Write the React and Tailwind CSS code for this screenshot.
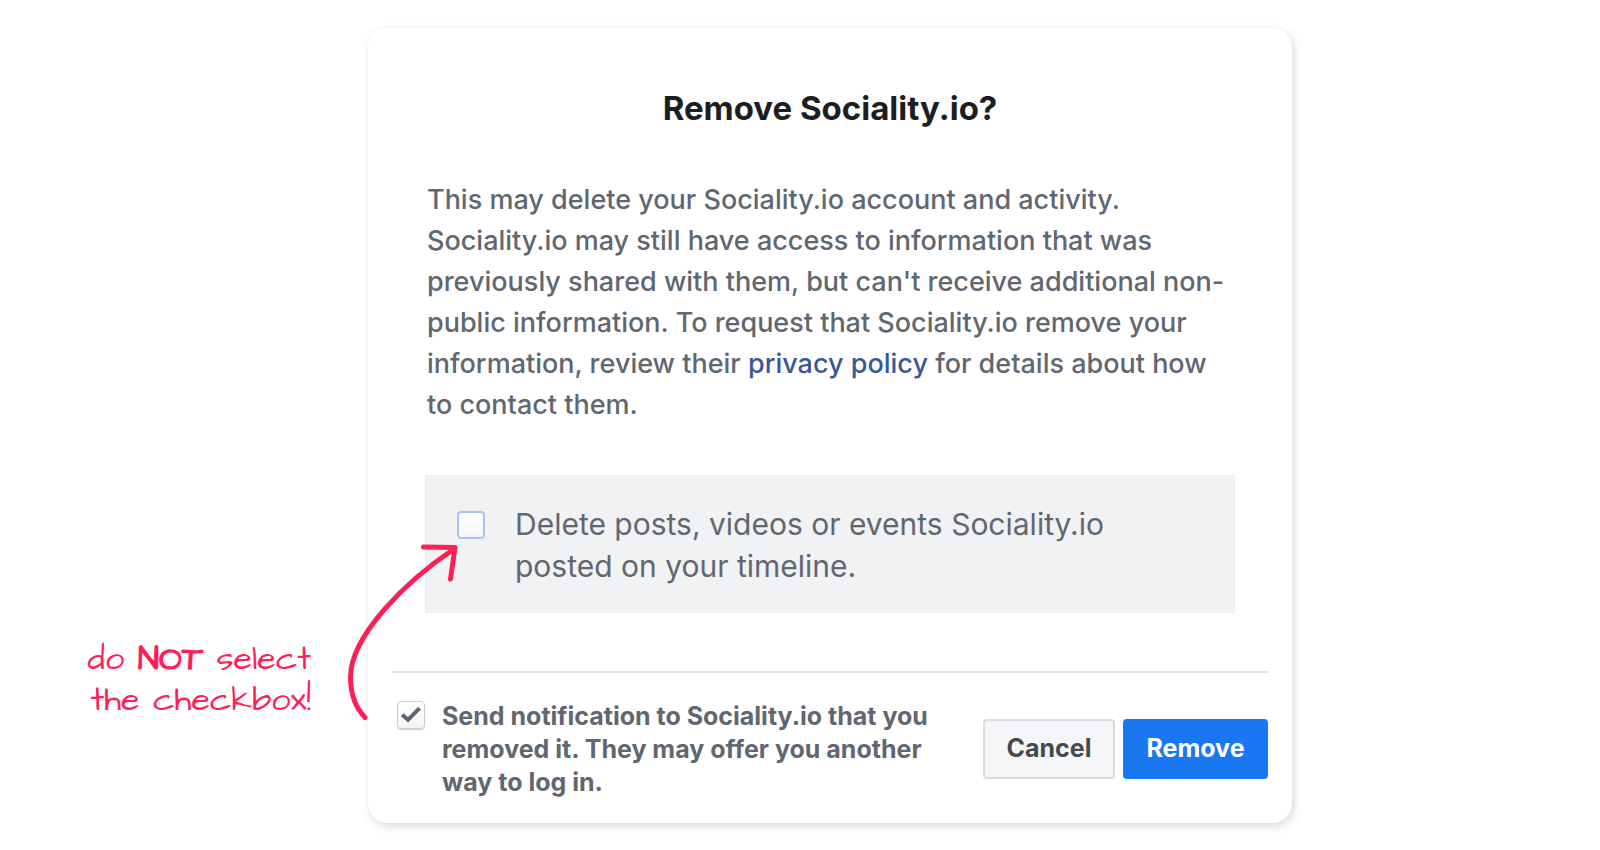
import { useState } from "react";

// ─── CHECKBOX ─────────────────────────────────────────────────────────────────

function Checkbox({ id, checked, onChange, className }) {
  return (
    <span className="relative flex w-7 h-7 shrink-0">
      <input
        id={id}
        type="checkbox"
        checked={checked}
        onChange={(e) => onChange(e.target.checked)}
        className={`appearance-none w-7 h-7 rounded-[4px] bg-linear-to-b ${className}`}
      />
      {checked && (
        <svg
          viewBox="0 0 28 28"
          className="absolute inset-0 w-7 h-7 pointer-events-none"
          fill="none"
          stroke="#5f6673"
          strokeWidth="4"
        >
          <path d="M5.2 13.7 L11 18.8 L22.6 7.1" />
        </svg>
      )}
    </span>
  );
}

// ─── HAND DRAWN ARROW ─────────────────────────────────────────────────────────

function Arrow() {
  return (
    <svg
      viewBox="0 0 120 190"
      aria-hidden="true"
      className="absolute -left-6 top-[508px] w-[120px] h-[190px] pointer-events-none"
      fill="none"
      stroke="#ff1f57"
      strokeWidth="5"
      strokeLinecap="round"
      strokeLinejoin="round"
    >
      <path d="M21 181.5 C11 171 6.5 157 6.5 141 C6.5 100 62 45 110 13" />
      <path d="M79.5 11 L111 11.5 L106.5 43" />
    </svg>
  );
}

export default function App() {
  const [deletePosts, setDeletePosts] = useState(false);
  const [notify, setNotify] = useState(true);

  return (
    <div className="min-h-screen bg-white flex items-start pt-7 pb-7 font-['Inter',sans-serif] text-[#606770]">
      <aside className="w-[368px] shrink-0 pt-[611px] pr-[57px]">
        <p className="text-right text-[34px] leading-[41px] text-[#ff1f57] font-['Architects_Daughter','Lato',sans-serif]">
          do <strong className="font-black">NOT</strong> select
          <br />
          the checkbox!
        </p>
      </aside>

      <main className="relative flex-1 max-w-[924px] rounded-[20px] bg-white px-6 pt-[60px] pb-6 shadow-[2px_3px_10px_rgba(60,90,90,0.22)]">
        <h1 className="text-center text-[33px] leading-10 font-bold text-[#1c1e21]">
          Remove Sociality.io?
        </h1>

        <p className="mt-[51px] px-[35px] text-[27px] leading-[41px] font-medium">
          This may delete your Sociality.io account and activity. Sociality.io may still have access to
          information that was previously shared with them, but can't receive additional non-public
          information. To request that Sociality.io remove your information, review their{" "}
          <a href="#privacy" className="text-[#385898]">
            privacy policy
          </a>{" "}
          for details about how to contact them.
        </p>

        <div className="mt-[50px] mx-[33px] flex items-start gap-[30px] border-2 border-[#e9f1f2] bg-[#f1f2f4] pl-[30px] pr-8 pt-[26px] pb-6">
          <div className="pt-2">
            <Checkbox
              id="delete-posts"
              checked={deletePosts}
              onChange={setDeletePosts}
              className="border-2 border-[#a9c1fa] from-white to-[#f5f6f7]"
            />
          </div>
          <label htmlFor="delete-posts" className="text-[30px] leading-[42px]">
            Delete posts, videos or events Sociality.io posted on your timeline.
          </label>
        </div>

        <div className="mt-[58px] border-t-2 border-[#e1e3e8] pt-[27px] flex items-start justify-between">
          <div className="flex items-start gap-[17px] pl-[5px]">
            <div className="pt-px">
              <Checkbox
                id="notify"
                checked={notify}
                onChange={setNotify}
                className="border border-[#cccdd0] from-white to-[#f3f4f6] shadow-[0_1px_1px_rgba(0,0,0,0.2)]"
              />
            </div>
            <label htmlFor="notify" className="max-w-[500px] text-[25px] leading-[33px] font-bold">
              Send notification to Sociality.io that you removed it. They may offer you another way to log in.
            </label>
          </div>

          <div className="flex gap-2 pt-[19px] shrink-0 text-[25px] font-bold">
            <button
              type="button"
              className="w-[132px] h-[60px] rounded-[4px] border-2 border-[#dadce1] bg-[#f5f6f8] text-[#444950]"
            >
              Cancel
            </button>
            <button type="button" className="w-[145px] h-[60px] rounded-[4px] bg-[#1a77f2] text-white">
              Remove
            </button>
          </div>
        </div>

        <Arrow />
      </main>
    </div>
  );
}
